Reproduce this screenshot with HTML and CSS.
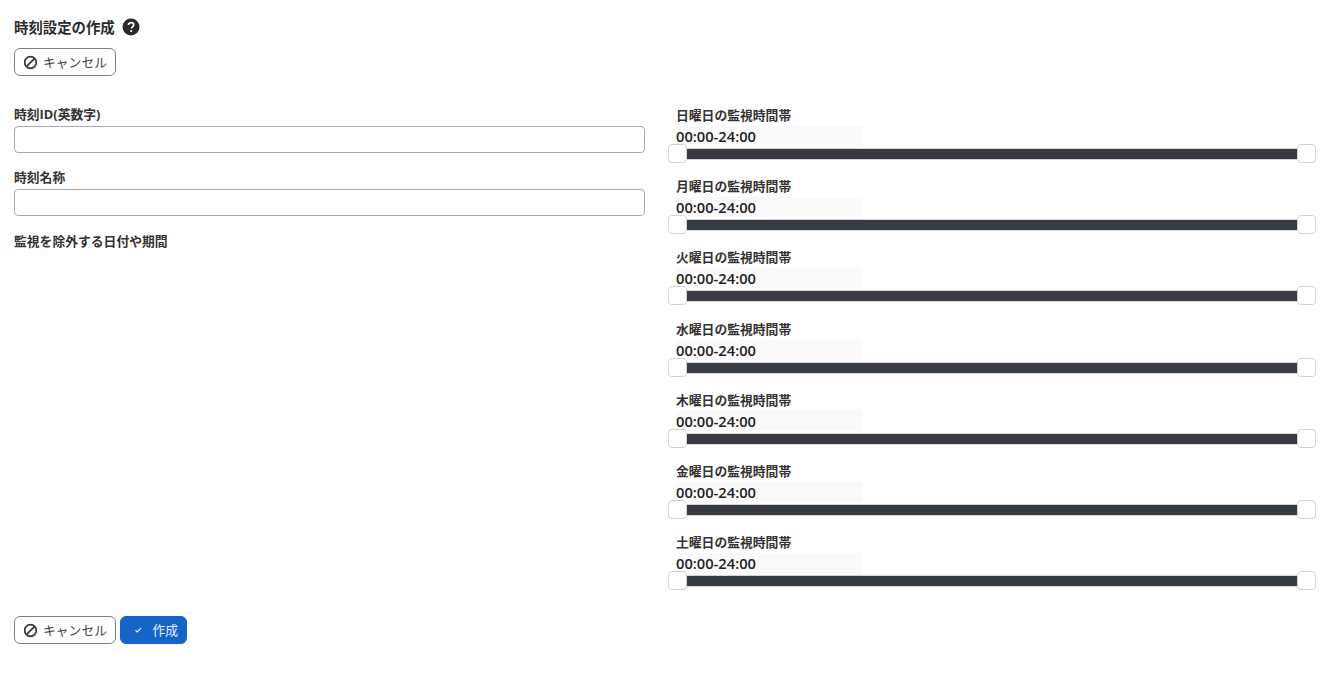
FILE: index.html
```html
<!DOCTYPE html>
<html lang="ja">

<head>
	<meta charset="UTF-8">
	<title>時刻設定の作成</title>
	<link rel="stylesheet" href="styles.css">
</head>

<body>
	<div class="page-title">
		<h1>時刻設定の作成</h1>
		<svg class="help-icon" viewBox="0 0 18 18" width="18" height="18">
			<circle cx="9" cy="9" r="8.5" fill="#2b2b2b"/>
			<path d="M6.4 7.1c0-1.5 1.1-2.5 2.7-2.5s2.6 1 2.6 2.2c0 1-.5 1.5-1.3 2.1-.7.5-.9.8-.9 1.5" fill="none" stroke="#fff" stroke-width="1.7"/>
			<circle cx="9.2" cy="13" r="1.1" fill="#fff"/>
		</svg>
	</div>

	<div class="top-actions">
		<button class="btn btn-outline">
			<svg class="btn-icon" viewBox="0 0 16 16" width="15" height="15">
				<circle cx="8" cy="8" r="6.2" fill="none" stroke="#333" stroke-width="1.8"/>
				<path d="M3.8 12.2 12.2 3.8" stroke="#333" stroke-width="1.8"/>
			</svg>
			<span class="btn-text">キャンセル</span>
		</button>
	</div>

	<div class="form-grid">
		<div class="form-left">
			<div class="field">
				<label>時刻ID(英数字)</label>
				<input type="text" class="text-input">
			</div>
			<div class="field">
				<label>時刻名称</label>
				<input type="text" class="text-input">
			</div>
			<div class="field field-dates">
				<label>監視を除外する日付や期間</label>
			</div>
		</div>

		<div class="form-right">
			<div class="day-row">
				<label>日曜日の監視時間帯</label>
				<div class="time-value">00:00-24:00</div>
				<div class="slider"><span class="handle"></span><span class="track"></span><span class="handle"></span></div>
			</div>
			<div class="day-row">
				<label>月曜日の監視時間帯</label>
				<div class="time-value">00:00-24:00</div>
				<div class="slider"><span class="handle"></span><span class="track"></span><span class="handle"></span></div>
			</div>
			<div class="day-row">
				<label>火曜日の監視時間帯</label>
				<div class="time-value">00:00-24:00</div>
				<div class="slider"><span class="handle"></span><span class="track"></span><span class="handle"></span></div>
			</div>
			<div class="day-row">
				<label>水曜日の監視時間帯</label>
				<div class="time-value">00:00-24:00</div>
				<div class="slider"><span class="handle"></span><span class="track"></span><span class="handle"></span></div>
			</div>
			<div class="day-row">
				<label>木曜日の監視時間帯</label>
				<div class="time-value">00:00-24:00</div>
				<div class="slider"><span class="handle"></span><span class="track"></span><span class="handle"></span></div>
			</div>
			<div class="day-row">
				<label>金曜日の監視時間帯</label>
				<div class="time-value">00:00-24:00</div>
				<div class="slider"><span class="handle"></span><span class="track"></span><span class="handle"></span></div>
			</div>
			<div class="day-row">
				<label>土曜日の監視時間帯</label>
				<div class="time-value">00:00-24:00</div>
				<div class="slider"><span class="handle"></span><span class="track"></span><span class="handle"></span></div>
			</div>
		</div>
	</div>

	<div class="bottom-actions">
		<button class="btn btn-outline">
			<svg class="btn-icon" viewBox="0 0 16 16" width="15" height="15">
				<circle cx="8" cy="8" r="6.2" fill="none" stroke="#333" stroke-width="1.8"/>
				<path d="M3.8 12.2 12.2 3.8" stroke="#333" stroke-width="1.8"/>
			</svg>
			<span class="btn-text">キャンセル</span>
		</button>
		<button class="btn btn-primary">
			<svg class="check-icon" viewBox="0 0 12 12" width="12" height="12">
				<path d="M2.2 6.4 4.8 8.8 9.8 3.4" fill="none" stroke="#fff" stroke-width="1.6"/>
			</svg>
			<span class="btn-text">作成</span>
		</button>
	</div>
</body>

</html>
```

FILE: styles.css
```css
body {
	margin: 0;
	padding: 15px 13px 0 14px;
	background-color: #fff;
	color: #333;
	font-family: "Open Sans", "Noto Sans CJK JP", sans-serif;
	font-size: 13px;
}

.page-title {
	display: flex;
	align-items: center;
	gap: 7px;
	height: 24px;
}

h1 {
	margin: 0 0 2px 0;
	font-size: 14.4px;
	font-weight: 700;
	color: #2b2b2b;
}

.top-actions {
	margin-top: 9px;
}

.btn {
	display: inline-flex;
	align-items: center;
	height: 28px;
	box-sizing: border-box;
	padding: 0 8px;
	border-radius: 6px;
	font-family: inherit;
	font-size: 12.8px;
	white-space: nowrap;
	cursor: pointer;
}

.btn-text {
	margin-bottom: 2px;
}

.btn-outline {
	width: 102px;
	border: 1px solid #808080;
	background-color: #fff;
	color: #444;
}

.btn-icon {
	margin-right: 5px;
}

.btn-primary {
	width: 67px;
	padding-left: 13px;
	border: 1px solid #1565c8;
	background-color: #1565c8;
	color: #e8f0fa;
}

.check-icon {
	margin-right: 10px;
}

.form-grid {
	display: grid;
	grid-template-columns: 631px 648px;
	column-gap: 23px;
	margin-top: 29px;
}

label {
	display: block;
	height: 21px;
	font-size: 12.8px;
	font-weight: 700;
	line-height: 19px;
	color: #333;
}

.field {
	margin-bottom: 15px;
}

.field-dates {
	padding-top: 1px;
}

.text-input {
	display: block;
	width: 100%;
	height: 27px;
	box-sizing: border-box;
	margin: 0;
	border: 1px solid #a9a9a9;
	border-radius: 4px;
	background-color: #fff;
}

.day-row {
	height: 71.2px;
}

.day-row label {
	margin-left: 8px;
	line-height: 20px;
}

.time-value {
	width: 186px;
	height: 20px;
	margin-left: 8px;
	background-color: #fafafa;
	font-size: 14.7px;
	font-weight: 600;
	line-height: 20px;
	color: #222;
}

.slider {
	display: flex;
	align-items: center;
	height: 19px;
	margin-top: -2px;
}

.track {
	flex: 1;
	height: 12px;
	margin-top: 1px;
	box-sizing: border-box;
	border: 1px solid #d5d5d5;
	border-width: 1px 0;
	background-color: #373c43;
}

.handle {
	width: 19px;
	height: 19px;
	box-sizing: border-box;
	border: 1px solid #d3d3d3;
	border-radius: 4px;
	background-color: #fff;
}

.bottom-actions {
	display: flex;
	gap: 4px;
	margin-top: 13px;
}
```
